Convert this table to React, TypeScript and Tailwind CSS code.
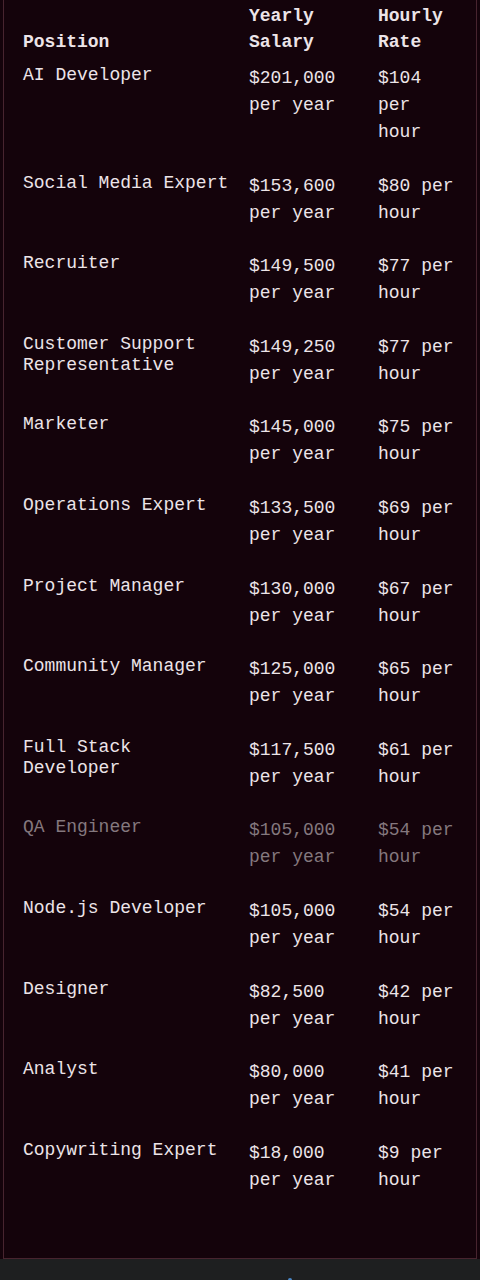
const rows = [
  { position: "AI Developer", yearly: "$201,000 per year", hourly: "$104 per hour" },
  { position: "Social Media Expert", yearly: "$153,600 per year", hourly: "$80 per hour" },
  { position: "Recruiter", yearly: "$149,500 per year", hourly: "$77 per hour" },
  { position: "Customer Support Representative", yearly: "$149,250 per year", hourly: "$77 per hour" },
  { position: "Marketer", yearly: "$145,000 per year", hourly: "$75 per hour" },
  { position: "Operations Expert", yearly: "$133,500 per year", hourly: "$69 per hour" },
  { position: "Project Manager", yearly: "$130,000 per year", hourly: "$67 per hour" },
  { position: "Community Manager", yearly: "$125,000 per year", hourly: "$65 per hour" },
  { position: "Full Stack Developer", yearly: "$117,500 per year", hourly: "$61 per hour" },
  { position: "QA Engineer", yearly: "$105,000 per year", hourly: "$54 per hour", muted: true },
  { position: "Node.js Developer", yearly: "$105,000 per year", hourly: "$54 per hour" },
  { position: "Designer", yearly: "$82,500 per year", hourly: "$42 per hour" },
  { position: "Analyst", yearly: "$80,000 per year", hourly: "$41 per hour" },
  { position: "Copywriting Expert", yearly: "$18,000 per year", hourly: "$9 per hour" },
]

export default function App() {
  return (
    <div className="w-[480px] h-[1280px] bg-[#14030b] flex flex-col overflow-hidden text-[18px] text-[#ece4e8] font-['Liberation_Mono',monospace]">
      <div className="flex-1 ml-[3px] w-[474px] border-x border-b border-[#47242f] pl-[19px] pt-[3px]">
        <div className="grid grid-cols-[226px_129px_80px] font-bold leading-[26px] pb-[9px]">
          <div className="self-end">Position</div>
          <div className="pr-[19px]">Yearly Salary</div>
          <div>Hourly Rate</div>
        </div>
        {rows.map((r) => (
          <div
            key={r.position}
            className={`grid grid-cols-[226px_129px_80px] pb-[25.6px] ${r.muted ? "text-[#84787e]" : ""}`}
          >
            <div className="pr-4 leading-[21px] pt-[1px]">{r.position}</div>
            <div className="pr-[19px] leading-[27px] pt-[1px]">{r.yearly}</div>
            <div className="leading-[27px] pt-[1px]">{r.hourly}</div>
          </div>
        ))}
      </div>
      <div className="h-[21px] bg-[#1e1f20] relative">
        <div className="absolute left-[288px] bottom-[-2px] w-[4px] h-[4px] rounded-full bg-[#4a88c8]" />
      </div>
    </div>
  )
}
